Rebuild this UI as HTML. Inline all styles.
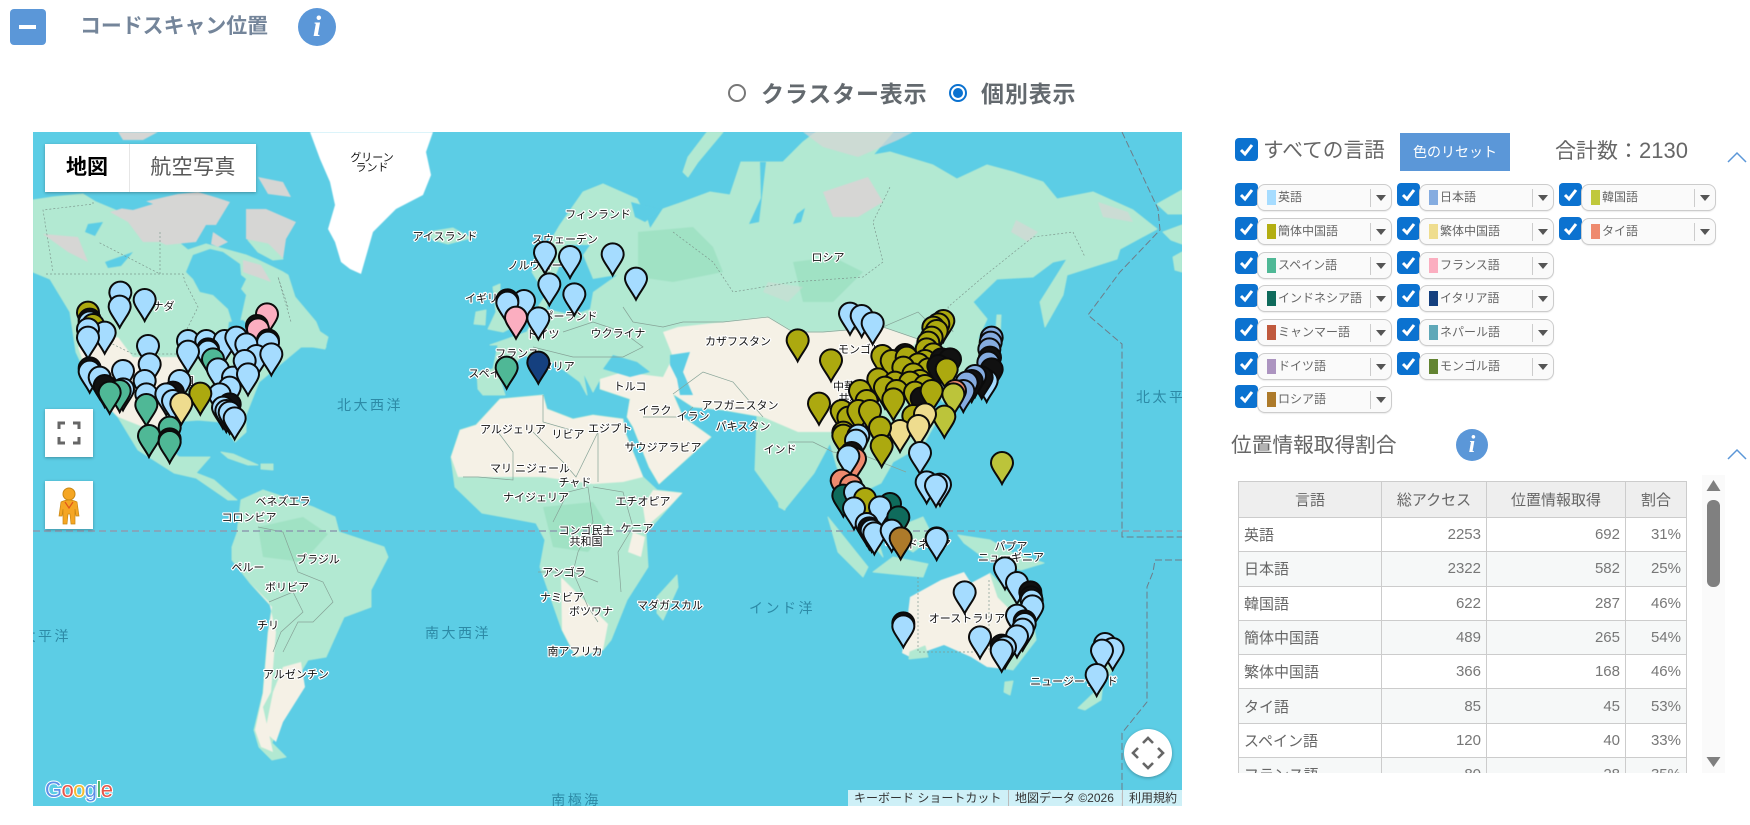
<!DOCTYPE html>
<html lang="ja"><head><meta charset="utf-8"><title>コードスキャン位置</title>
<style>
*{box-sizing:border-box}
html,body{margin:0;padding:0;width:1750px;height:825px;overflow:hidden;background:#fff;font-family:"Liberation Sans","Noto Sans CJK JP",sans-serif;color:#666}
.a{position:absolute}
.btn{left:10px;top:9px;width:36px;height:36px;background:#5b97d8;border-radius:4px}
.btn i{position:absolute;left:9px;top:16px;width:17px;height:4px;background:#fff}
.title{left:80px;top:12px;font-size:20.9px;font-weight:700;color:#74859a;line-height:30px;white-space:nowrap}
.info{border-radius:50%;background:#5b97d8;color:#fff;font-family:"Liberation Serif",serif;font-style:italic;font-weight:700;text-align:center}
.rad{border-radius:50%;width:18px;height:18px;border:2px solid #777;background:#fff}
.rad.on{border:2px solid #0b72d0}
.rad.on i{position:absolute;left:2px;top:2px;width:10px;height:10px;border-radius:50%;background:#0b72d0}
.rl{font-size:23px;font-weight:700;color:#63696e;line-height:34px;letter-spacing:.85px;white-space:nowrap}
#map{left:33px;top:132px;width:1149px;height:674px;overflow:hidden;background:#5ccde5}
#map svg{position:absolute;left:0;top:0}
.c{fill:#b2e9d2;stroke:#b2e9d2;stroke-width:1;stroke-linejoin:round}.be{fill:#f5f1e6}.g{fill:#d6d6d4}.f{fill:#a0e2c4}.w{fill:#5ccde5}.ice{fill:#fff}
.l text{font-size:11px;fill:#111;stroke:#fff;stroke-width:2.4px;paint-order:stroke;stroke-linejoin:round;text-anchor:middle;dominant-baseline:central}
.s text{font-size:14px;fill:#2d8aa6;letter-spacing:2.5px;text-anchor:middle;dominant-baseline:central}
.bd{fill:none;stroke:#7f9a90;stroke-width:.7;stroke-dasharray:2 2}
.bs{fill:none;stroke:#86a397;stroke-width:.7}
#pins use{stroke:#0b0b0b;stroke-width:6}
.b{fill:#a5dcff}.o{fill:#aca90f}.y{fill:#bcc43a}.k{fill:#eedc8e}.j{fill:#85ace0}.t{fill:#4fb896}.d{fill:#0f6b5c}.r{fill:#ee8a6e}.p{fill:#fbaec0}.n{fill:#15407f}.u{fill:#ad7a2a}.x{fill:#111}
.mt{left:12px;top:12px;width:211px;height:48px;background:#fff;box-shadow:0 1px 3px rgba(0,0,0,.3);font-size:21px;line-height:48px}
.mt b{position:absolute;left:0;top:0;text-align:center;color:#000;font-weight:700;border-right:1px solid #e6e6e6;height:48px;width:85px}
.mt span{position:absolute;left:85px;top:0;width:126px;text-align:center;color:#565656;letter-spacing:.4px}
.sq{width:48px;height:48px;background:#fff;box-shadow:0 1px 3px rgba(0,0,0,.3)}
.attr{left:815px;top:658px;width:334px;height:16px;background:rgba(255,255,255,.7);font-size:12px;line-height:16px;color:#333;white-space:nowrap}
.attr span{position:absolute;top:0}
.cb{width:23px;height:23px;background:#0b72d0;border-radius:4px}
.cb svg{position:absolute;left:3px;top:3px}
.sel{width:135px;height:27px;background:#fafafa;border:1px solid #ccc;border-radius:8px;box-shadow:0 1px 1px rgba(0,0,0,.08);font-size:12px;line-height:25px;color:#666;white-space:nowrap}
.sel u{position:absolute;left:9px;top:5px;width:9px;height:15px}
.sel span{position:absolute;left:20px;top:0}
.sel em{position:absolute;left:112px;top:4px;width:1px;height:18px;background:#ccc}
.sel i{position:absolute;left:118px;top:10px;border-left:5.5px solid transparent;border-right:5.5px solid transparent;border-top:6px solid #555}
.reset{left:1400px;top:133px;width:110px;height:38px;background:#5b97d8;color:#fff;font-size:14px;line-height:38px;text-align:center}
.h{font-size:20.7px;color:#666;line-height:30px;white-space:nowrap}
.tw{left:1238px;top:481px;width:449px;height:292px;overflow:hidden}
table{border-collapse:collapse;table-layout:fixed;width:448px;font-size:14.5px;color:#777}
th,td{border:1px solid #ccc;padding:0 5px;height:34.3px;font-weight:400}
th{background:#eee;color:#666;text-align:center;height:36px;font-size:15px}
td{text-align:right;font-size:15px}
td:first-child{text-align:left;color:#666;font-size:15px}
tbody tr:nth-child(odd) td{background:#fff}
tbody tr:nth-child(even) td{background:#f6f8f8}
</style></head><body>

<div class="a btn"><i></i></div>
<div class="a title">コードスキャン位置</div>
<div class="a info" style="left:298px;top:8px;width:38px;height:38px;font-size:30px;line-height:38px">i</div>

<div class="a rad" style="left:728px;top:84px"></div>
<div class="a rl" style="left:761px;top:77px">クラスター表示</div>
<div class="a rad on" style="left:949px;top:84px"><i></i></div>
<div class="a rl" style="left:981px;top:77px">個別表示</div>

<div class="a" id="map">
<svg width="1149" height="674" viewBox="0 0 1149 674" xmlns="http://www.w3.org/2000/svg">
<defs><path id="p" d="M0,0C-12,-24 -33,-46 -33,-63A33,33 0 1 1 33,-63C33,-46 12,-24 0,0Z"/></defs>

<g style="filter:blur(.5px)">
<polygon class="ice" points="277,0 400,0 393,20 398,43 390,63 363,77 340,100 328,142 317,137 308,130 302,110 295,97 302,73 297,50 287,27"/>
<!-- North America -->
<polygon class="c" points="0,68 20,65 50,62 63,70 87,80 110,78 127,95 155,118 173,112 213,123 225,128 250,140 255,143 262,165 283,190 293,215 268,215 250,230 226,250 213,283 213,300 202,310 188,290 165,288 140,290 125,295 128,310 146,325 177,325 163,341 181,348 204,368 195,368 163,346 141,341 105,318 85,285 70,270 57,250 43,220 37,180 17,147 0,140"/>
<polygon class="be" points="45,215 85,205 100,225 150,225 150,250 135,280 125,295 110,295 85,285 70,270 57,250"/>
<polygon class="c" points="155,205 213,200 240,215 215,250 205,280 180,280 160,250"/>
<polygon class="c" points="280,195 295,205 292,217 280,215"/>
<polygon class="w" points="153,140 160,123 177,117 190,120 207,132 208,143 213,147 208,157 213,163 207,190 200,193 195,177 180,163 167,160 160,147"/>
<polygon class="w" points="196,190 210,188 222,200 205,205 195,198"/>
<polygon class="w" points="72,130 100,120 88,134 75,136"/>
<polygon class="w" points="55,92 70,90 62,104 52,100"/>
<polygon class="g" points="10,102 45,105 55,130 35,120"/>
<polygon class="g" points="77,80 110,70 145,62 165,60 185,66 197,70 183,93 173,93 163,110 133,113 127,110 110,110 95,90"/>
<polygon class="w" points="62,65 95,62 120,72 100,78 78,75"/>
<polygon class="g" points="213,77 233,77 263,90 253,107 250,127 233,113 213,107"/>
<polygon class="c" points="215,108 235,112 250,127 240,128 225,120"/>
<polygon class="g" points="180,100 195,110 185,115 178,112"/>
<polygon class="g" points="210,128 228,133 238,150 210,140"/>
<polygon class="g" points="85,0 125,0 110,8 90,8"/>
<polygon class="g" points="225,45 250,50 258,65 235,62"/>
<polygon class="c" points="188,320 200,322 225,333 215,333 195,326"/>
<polygon class="c" points="228,332 240,332 240,338 228,337"/>
<!-- South America -->
<polygon class="c" points="208,368 230,358 280,375 302,385 306,400 351,415 355,425 338,458 338,475 311,485 293,525 275,528 257,558 248,585 239,611 253,625 239,628 226,615 221,598 230,561 235,501 239,475 217,451 199,428 199,415 204,401"/>
<polygon class="f" points="225,395 270,385 295,402 270,430 230,425"/>
<polygon class="be" points="218,452 236,470 243,500 238,560 230,575 240,620 228,615 222,598 230,561 235,501 239,475"/>
<polygon class="be" points="250,535 268,530 272,555 250,590 243,610 232,600 240,560"/>
<!-- Africa -->
<polygon class="c" points="418,325 427,298 443,293 467,267 510,263 514,277 540,287 560,283 590,287 592,300 610,345 624,358 649,361 636,375 613,401 615,435 594,468 578,508 570,518 543,525 529,498 507,435 512,408 503,391 449,381 422,355"/>
<polygon class="be" points="418,325 427,298 443,293 467,267 510,263 514,277 540,287 560,283 590,287 592,300 610,345 590,350 560,352 510,345 470,345 425,345"/>
<polygon class="be" points="620,358 649,361 636,375 613,395 610,375"/>
<polygon class="be" points="528,445 553,470 575,492 570,518 543,525 529,498"/>
<polygon class="f" points="510,375 560,370 575,395 555,420 520,415"/>
<polygon class="be" points="600,400 612,405 608,425 595,420"/>
<polygon class="c" points="644,443 645,455 630,488 624,481 624,465"/>
<!-- Eurasia -->
<polygon class="c" points="499,140 527,93 550,60 570,52 604,67 614,87 617,97 630,77 650,70 677,60 697,63 708,30 727,30 750,30 770,10 783,0 860,0 840,23 857,20 900,33 924,47 954,33 980,40 1010,50 1024,67 1060,60 1100,78 1124,97 1087,117 1084,127 1034,143 1030,163 1012,195 1007,170 1024,143 1034,127 1020,130 1000,145 964,147 940,170 954,187 940,217 924,233 912,237 914,267 900,267 900,240 892,238 893,262 907,283 890,313 860,330 848,351 827,361 838,385 850,425 838,410 826,385 816,368 804,335 797,311 781,341 751,378 722,338 724,284 690,278 660,275 640,262 650,285 678,305 626,352 616,335 600,295 594,285 597,267 567,257 567,247 560,260 550,240 554,263 547,250 520,230 490,223 467,247 472,263 450,263 445,257 444,240 460,237 465,213 457,213 494,200 505,175 517,157 507,153"/>
<polygon class="f" points="605,100 660,95 680,115 690,140 640,150 605,145"/>
<polygon class="f" points="760,130 800,125 830,140 800,170 770,170"/>
<polygon class="be" points="630,200 645,195 690,190 735,185 760,200 790,200 850,195 885,207 870,230 855,255 835,290 800,300 765,300 730,285 724,284 690,278 660,275 640,262 650,285 678,305 626,352 616,335 600,295 594,285 597,267 567,257 567,247 590,240 630,245 640,225"/>
<polygon class="g" points="790,60 835,45 850,70 825,85 800,85"/>
<polygon class="g" points="735,150 770,155 755,170 730,160" opacity=".45"/>
<polygon class="g" points="983,88 1005,100 995,110 978,100" opacity=".7"/>
<polygon class="g" points="1065,70 1095,80 1100,90 1070,85" opacity=".7"/>
<polygon class="g" points="825,25 865,8 880,0 770,0 790,15" opacity=".75"/>
<polygon class="w" points="557,177 540,183 514,177 517,157 527,133 533,113 557,113 550,123 560,147 584,143 560,160"/>
<polygon class="w" points="570,237 580,223 604,230 617,240 597,245"/>
<polygon class="w" points="637,223 657,220 650,240 660,263 647,263 644,247 637,233"/>
<polygon class="w" points="727,30 733,30 726,90 716,92 728,66"/>
<polygon class="w" points="598,70 628,78 612,90 602,85"/>
<polygon class="w" points="764,82 772,76 768,90 760,92"/>
<polygon class="c" points="674,0 690,0 665,30 655,45 650,40 655,25"/>
<polygon class="c" points="964,183 968,183 967,205 962,212"/>
<polygon class="c" points="460,155 467,152 467,175 480,195 470,200 455,197 463,180"/>
<polygon class="c" points="443,180 453,178 452,193 441,192"/>
<polygon class="c" points="395,100 420,96 438,106 415,112 400,108"/>
<polygon class="c" points="882,240 892,235 890,255 900,265 890,270 880,252"/>
<polygon class="c" points="925,215 945,205 950,220 935,255 910,270 905,262 925,238"/>
<polygon class="c" points="1030,100 1040,98 1044,102 1032,104" />
<polygon class="c" points="1124,72 1149,58 1149,82 1135,82"/>
<polygon class="c" points="1130,100 1149,93 1149,112 1138,108"/>
<polygon class="c" points="1140,125 1149,120 1149,140 1142,138"/>
<polygon class="c" points="795,385 815,410 835,435 830,445 805,420"/>
<polygon class="c" points="840,440 890,445 895,432 860,425"/>
<polygon class="c" points="865,395 890,385 900,405 880,420 862,410"/>
<polygon class="c" points="900,345 912,360 905,375 895,365"/>
<polygon class="c" points="925,403 957,408 980,421 1011,431 988,438 950,425 931,411"/>
<polygon class="be" points="908,448 931,440 938,451 957,441 973,458 999,481 1003,508 980,538 954,535 938,525 911,513 877,525 869,521 873,498 877,465"/>
<polygon class="c" points="957,441 973,458 999,481 1003,508 980,538 968,535 985,505 980,480 965,465"/>
<polygon class="c" points="877,520 892,514 895,525 876,527"/>
<polygon class="c" points="972,550 980,549 977,563 971,560"/>
<polygon class="c" points="1045,576 1064,558 1070,550 1068,568 1052,578"/>
<polygon class="c" points="1072,530 1082,520 1088,525 1076,543"/>
<polygon class="c" points="745,365 752,368 752,378 746,375"/>
</g>

<polyline class="bd" points="13,142 150,142 152,150 165,175 150,205 147,222 100,222 65,205"/>
<polyline class="bd" points="60,70 60,72 10,78 20,140"/>
<polyline class="bd" points="127,100 127,142 65,110"/>
<polyline class="bd" points="255,175 245,145 258,190"/>
<polyline class="bs" points="500,300 530,330 543,345 565,300 565,350"/>
<polyline class="bs" points="465,300 480,320 480,348 445,345 430,345"/>
<polyline class="bs" points="510,263 510,290 545,300"/>
<polyline class="bs" points="520,390 535,360 555,355 560,390 545,420 540,440 565,450"/>
<polyline class="bs" points="560,355 590,360 600,395 585,420 588,460"/>
<polyline class="bs" points="505,440 540,440 555,475 565,490"/>
<polyline class="bs" points="225,395 250,400 265,440 290,450 300,470 280,490 265,490 250,520"/>
<polyline class="bs" points="236,470 260,460 270,480 248,500 240,520"/>
<polyline class="bs" points="590,175 600,190 630,195 650,190 690,190 735,185 760,200 790,200 850,195 885,207"/>
<polyline class="bs" points="530,200 560,190 590,200 610,215 590,225 540,225 500,215"/>
<polyline class="bs" points="640,262 670,240 700,250 730,285"/>
<polyline class="bs" points="610,285 650,285 660,275"/>
<polyline class="bd" points="640,100 680,130 700,160 760,150 830,145 850,130 840,90 857,55"/>
<polyline class="bd" points="920,200 915,175 950,145 1000,105 1040,100 1052,125"/>
<polyline class="bs" points="850,195 885,180 905,200 895,225"/>
<polyline class="bs" points="873,340 835,325 800,320 780,310 755,310"/>
<polyline class="bd" points="956,448 956,520"/>
<polyline class="bd" points="885,445 885,520 940,520"/>
<line x1="0" y1="399" x2="1149" y2="399" stroke="#8d9cb0" stroke-width="1.5" stroke-dasharray="7 4"/>
<polyline fill="none" stroke="#6e7c88" stroke-width="1" stroke-dasharray="7 3" points="1089,0 1125,77 1127,98 1087,140 1055,183 1089,212 1089,405 1149,405"/>
<polyline fill="none" stroke="#6e7c88" stroke-width="1" stroke-dasharray="7 3" points="1149,428 1122,428 1120,440 1114,455 1114,570 1089,601 1089,674"/>

<g class="s">
<text x="337" y="273">北大西洋</text><text x="425" y="501">南大西洋</text><text x="749" y="476">インド洋</text><text x="543" y="668">南極海</text>
<text x="1103" y="265" style="text-anchor:start">北太平洋</text><text x="38" y="504" style="text-anchor:end">太平洋</text>
</g>
<g class="l">
<text x="339" y="26">グリーン</text><text x="339" y="36">ランド</text><text x="412" y="105">アイスランド</text>
<text x="565" y="83">フィンランド</text><text x="532" y="108">スウェーデン</text><text x="502" y="134">ノルウェー</text><text x="454" y="167">イギリス</text>
<text x="537" y="185">ポーランド</text><text x="510" y="203">ドイツ</text><text x="585" y="202">ウクライナ</text><text x="484" y="222">フランス</text>
<text x="457" y="242">スペイン</text><text x="520" y="235">イタリア</text><text x="597" y="255">トルコ</text><text x="705" y="210">カザフスタン</text>
<text x="827" y="218">モンゴル</text><text x="795" y="126">ロシア</text><text x="822" y="255">中華人民</text><text x="822" y="267">共和国</text>
<text x="707" y="274">アフガニスタン</text><text x="660" y="285">イラン</text><text x="622" y="279">イラク</text><text x="710" y="295">パキスタン</text>
<text x="630" y="316">サウジアラビア</text><text x="747" y="318">インド</text><text x="577" y="297">エジプト</text><text x="535" y="303">リビア</text><text x="480" y="298">アルジェリア</text>
<text x="497" y="337">マリ ニジェール</text><text x="542" y="351">チャド</text><text x="503" y="366">ナイジェリア</text><text x="610" y="370">エチオピア</text>
<text x="553" y="399">コンゴ民主</text><text x="553" y="410">共和国</text><text x="604" y="397">ケニア</text><text x="531" y="441">アンゴラ</text><text x="529" y="466">ナミビア</text>
<text x="558" y="480">ボツワナ</text><text x="637" y="474">マダガスカル</text><text x="542" y="520">南アフリカ</text>
<text x="250" y="370">ベネズエラ</text><text x="216" y="386">コロンビア</text><text x="285" y="428">ブラジル</text><text x="215" y="436">ペルー</text><text x="254" y="456">ボリビア</text><text x="235" y="494">チリ</text><text x="263" y="543">アルゼンチン</text>
<text x="125" y="175">カナダ</text><text x="150" y="250">米国</text>
<text x="885" y="413">インドネシア</text><text x="934" y="487">オーストラリア</text><text x="978" y="415">パプア</text><text x="978" y="426">ニューギニア</text><text x="1041" y="550">ニュージーランド</text>
</g>

<g id="pins">
<g transform="scale(.33333)">
<use href="#p" x="262" y="545" class="b"/><use href="#p" x="260" y="587" class="b"/><use href="#p" x="335" y="567" class="b"/>
<use href="#p" x="165" y="605" class="o"/><use href="#p" x="170" y="626" class="x"/><use href="#p" x="170" y="634" class="b"/><use href="#p" x="180" y="642" class="o"/><use href="#p" x="215" y="665" class="b"/><use href="#p" x="165" y="655" class="b"/><use href="#p" x="165" y="680" class="b"/>
<use href="#p" x="702" y="610" class="p"/><use href="#p" x="672" y="645" class="x"/><use href="#p" x="675" y="655" class="p"/>
<use href="#p" x="345" y="705" class="b"/><use href="#p" x="350" y="760" class="b"/><use href="#p" x="270" y="780" class="b"/>
<use href="#p" x="465" y="690" class="b"/><use href="#p" x="520" y="690" class="b"/><use href="#p" x="575" y="690" class="b"/><use href="#p" x="610" y="680" class="b"/><use href="#p" x="525" y="715" class="x"/><use href="#p" x="525" y="722" class="b"/><use href="#p" x="465" y="722" class="b"/><use href="#p" x="540" y="745" class="t"/>
<use href="#p" x="705" y="688" class="x"/><use href="#p" x="705" y="695" class="b"/><use href="#p" x="640" y="700" class="b"/><use href="#p" x="670" y="735" class="b"/><use href="#p" x="715" y="730" class="b"/>
<use href="#p" x="170" y="772" class="x"/><use href="#p" x="170" y="782" class="b"/><use href="#p" x="200" y="800" class="b"/><use href="#p" x="215" y="825" class="x"/><use href="#p" x="270" y="835" class="b"/>
<use href="#p" x="335" y="810" class="b"/><use href="#p" x="340" y="850" class="b"/><use href="#p" x="260" y="840" class="t"/><use href="#p" x="230" y="845" class="t"/>
<use href="#p" x="555" y="775" class="b"/><use href="#p" x="600" y="800" class="b"/><use href="#p" x="635" y="750" class="b"/><use href="#p" x="645" y="790" class="b"/><use href="#p" x="590" y="830" class="b"/><use href="#p" x="560" y="850" class="b"/>
<use href="#p" x="440" y="810" class="b"/><use href="#p" x="420" y="845" class="x"/><use href="#p" x="400" y="850" class="b"/><use href="#p" x="420" y="870" class="b"/>
<use href="#p" x="340" y="882" class="t"/><use href="#p" x="502" y="848" class="o"/><use href="#p" x="445" y="878" class="k"/>
<use href="#p" x="590" y="880" class="x"/><use href="#p" x="570" y="890" class="b"/><use href="#p" x="580" y="900" class="b"/><use href="#p" x="590" y="905" class="b"/><use href="#p" x="605" y="922" class="b"/>
<use href="#p" x="410" y="950" class="t"/><use href="#p" x="348" y="975" class="t"/><use href="#p" x="410" y="985" class="x"/><use href="#p" x="410" y="993" class="t"/>
</g>
<g transform="translate(417,0) scale(.33333)">
<use href="#p" x="285" y="425" class="b"/><use href="#p" x="360" y="438" class="b"/><use href="#p" x="488" y="430" class="b"/><use href="#p" x="558" y="503" class="b"/><use href="#p" x="298" y="520" class="b"/><use href="#p" x="373" y="550" class="b"/>
<use href="#p" x="222" y="570" class="b"/><use href="#p" x="172" y="568" class="x"/><use href="#p" x="172" y="575" class="b"/><use href="#p" x="198" y="620" class="p"/><use href="#p" x="265" y="622" class="b"/>
<use href="#p" x="265" y="755" class="n"/><use href="#p" x="170" y="770" class="t"/>
<use href="#p" x="1043" y="688" class="o"/><use href="#p" x="1143" y="748" class="o"/><use href="#p" x="1107" y="878" class="o"/>
</g>
<g transform="translate(767,0) scale(.33333)">
<use href="#p" x="150" y="608" class="b"/><use href="#p" x="185" y="615" class="b"/><use href="#p" x="218" y="637" class="b"/>
<use href="#p" x="430" y="630" class="o"/><use href="#p" x="415" y="640" class="o"/><use href="#p" x="400" y="650" class="o"/><use href="#p" x="410" y="660" class="o"/><use href="#p" x="395" y="680" class="o"/><use href="#p" x="385" y="695" class="o"/><use href="#p" x="380" y="715" class="o"/><use href="#p" x="400" y="730" class="o"/><use href="#p" x="375" y="750" class="o"/>
<use href="#p" x="247" y="735" class="o"/><use href="#p" x="315" y="732" class="x"/><use href="#p" x="275" y="750" class="o"/><use href="#p" x="320" y="740" class="o"/><use href="#p" x="355" y="760" class="o"/><use href="#p" x="310" y="770" class="o"/><use href="#p" x="385" y="775" class="o"/>
<use href="#p" x="425" y="745" class="x"/><use href="#p" x="450" y="745" class="x"/><use href="#p" x="415" y="765" class="x"/><use href="#p" x="440" y="775" class="o"/>
<use href="#p" x="235" y="805" class="o"/><use href="#p" x="340" y="790" class="o"/><use href="#p" x="360" y="810" class="o"/><use href="#p" x="285" y="815" class="o"/><use href="#p" x="255" y="830" class="o"/><use href="#p" x="330" y="815" class="o"/><use href="#p" x="375" y="825" class="o"/><use href="#p" x="290" y="840" class="o"/><use href="#p" x="345" y="845" class="o"/><use href="#p" x="280" y="865" class="o"/><use href="#p" x="365" y="862" class="x"/><use href="#p" x="395" y="840" class="o"/>
<use href="#p" x="180" y="840" class="o"/><use href="#p" x="200" y="870" class="o"/>
<use href="#p" x="125" y="900" class="o"/><use href="#p" x="145" y="920" class="o"/><use href="#p" x="175" y="900" class="o"/><use href="#p" x="210" y="900" class="o"/>
<use href="#p" x="575" y="680" class="j"/><use href="#p" x="572" y="695" class="j"/><use href="#p" x="568" y="715" class="j"/><use href="#p" x="570" y="740" class="x"/><use href="#p" x="565" y="755" class="j"/><use href="#p" x="575" y="775" class="x"/>
<use href="#p" x="560" y="810" class="b"/><use href="#p" x="545" y="800" class="x"/><use href="#p" x="525" y="795" class="j"/><use href="#p" x="515" y="810" class="x"/><use href="#p" x="500" y="815" class="j"/><use href="#p" x="490" y="840" class="j"/><use href="#p" x="465" y="840" class="r"/><use href="#p" x="460" y="850" class="y"/>
<use href="#p" x="433" y="917" class="y"/>
<use href="#p" x="340" y="915" class="o"/><use href="#p" x="375" y="910" class="k"/><use href="#p" x="300" y="960" class="k"/><use href="#p" x="355" y="945" class="k"/>
<use href="#p" x="130" y="965" class="o"/><use href="#p" x="240" y="950" class="o"/><use href="#p" x="245" y="1005" class="o"/>
</g>
<g transform="translate(747,148) scale(.33333)">
<use href="#p" x="190" y="530" class="o"/><use href="#p" x="235" y="530" class="b"/><use href="#p" x="228" y="545" class="b"/><use href="#p" x="215" y="582" class="x"/><use href="#p" x="225" y="600" class="r"/><use href="#p" x="205" y="592" class="b"/>
<use href="#p" x="420" y="582" class="b"/><use href="#p" x="480" y="677" class="b"/><use href="#p" x="440" y="670" class="b"/><use href="#p" x="468" y="680" class="b"/>
<use href="#p" x="185" y="665" class="r"/><use href="#p" x="213" y="680" class="r"/><use href="#p" x="190" y="710" class="d"/><use href="#p" x="225" y="700" class="b"/><use href="#p" x="255" y="720" class="o"/><use href="#p" x="330" y="735" class="d"/><use href="#p" x="300" y="745" class="b"/><use href="#p" x="222" y="748" class="b"/><use href="#p" x="355" y="775" class="d"/>
<use href="#p" x="260" y="795" class="b"/><use href="#p" x="268" y="808" class="x"/><use href="#p" x="275" y="815" class="b"/><use href="#p" x="283" y="823" class="b"/><use href="#p" x="335" y="815" class="b"/><use href="#p" x="362" y="838" class="u"/><use href="#p" x="470" y="838" class="b"/>
<use href="#p" x="666" y="612" class="y"/>
</g>
<g transform="translate(567,268) scale(.33333)">
<use href="#p" x="1215" y="568" class="b"/><use href="#p" x="1251" y="612" class="b"/><use href="#p" x="1094" y="640" class="b"/><use href="#p" x="910" y="733" class="x"/><use href="#p" x="910" y="742" class="b"/>
<use href="#p" x="1291" y="640" class="x"/><use href="#p" x="1293" y="655" class="x"/><use href="#p" x="1295" y="665" class="b"/><use href="#p" x="1297" y="682" class="b"/><use href="#p" x="1251" y="710" class="b"/><use href="#p" x="1274" y="727" class="x"/><use href="#p" x="1274" y="735" class="b"/><use href="#p" x="1268" y="752" class="b"/><use href="#p" x="1251" y="772" class="b"/><use href="#p" x="1140" y="775" class="b"/>
<use href="#p" x="1205" y="800" class="x"/><use href="#p" x="1215" y="805" class="b"/><use href="#p" x="1205" y="815" class="b"/>
<use href="#p" x="1515" y="795" class="b"/><use href="#p" x="1538" y="810" class="b"/><use href="#p" x="1506" y="815" class="b"/><use href="#p" x="1490" y="888" class="b"/>
<use href="#p" x="1010" y="480" class="b"/>
</g>
</g>

<text x="12" y="665" font-family="Liberation Sans,sans-serif" font-size="22" stroke="#fff" stroke-width="2" paint-order="stroke" letter-spacing="-.6"><tspan fill="#5c8fe8">G</tspan><tspan fill="#e8574a">o</tspan><tspan fill="#f2bb2f">o</tspan><tspan fill="#5c8fe8">g</tspan><tspan fill="#4db46a">l</tspan><tspan fill="#e8574a">e</tspan></text>
</svg>

<div class="a mt"><b>地図</b><span>航空写真</span></div>
<div class="a sq" style="left:12px;top:277px"><svg width="48" height="48"><path d="M14,20V14H20M28,14H34V20M34,28V34H28M20,34H14V28" fill="none" stroke="#666" stroke-width="3"/></svg></div>
<div class="a sq" style="left:12px;top:349px"><svg width="48" height="48"><circle cx="24" cy="13" r="6" fill="#f5a623" stroke="#c98612"/><path d="M16,21Q24,17 32,21L34,35 31,35 30,28 30,43 26,43 25,33 23,33 22,43 18,43 18,28 17,35 14,35Z" fill="#f5a623" stroke="#c98612" stroke-width=".7"/><path d="M20,21L24,27 28,21" fill="none" stroke="#e0561a" stroke-width="1.2"/></svg></div>
<div class="a" style="left:1091px;top:597px;width:48px;height:48px;border-radius:50%;background:#fff;box-shadow:0 1px 3px rgba(0,0,0,.3)"><svg width="48" height="48"><path d="M19,14L24,9 29,14M19,34L24,39 29,34M14,19L9,24 14,29M34,19L39,24 34,29" fill="none" stroke="#666" stroke-width="2.6"/></svg></div>
<div class="a attr"><span style="left:6px">キーボード ショートカット</span><span style="left:160px;width:1px;height:16px;background:#bbb"></span><span style="left:167px">地図データ ©2026</span><span style="left:274px;width:1px;height:16px;background:#bbb"></span><span style="left:281px">利用規約</span></div>
</div>

<div class="a cb" style="left:1235px;top:138px"><svg width="17" height="17"><path d="M3,9L7,13 14,4" fill="none" stroke="#fff" stroke-width="3"/></svg></div>
<div class="a h" style="left:1263px;top:136px">すべての言語</div>
<div class="a reset">色のリセット</div>
<div class="a h" style="left:1555px;top:136px;font-size:21px">合計数：<span style="font-size:22px">2130</span></div>
<svg class="a" style="left:1727px;top:150px" width="20" height="14"><path d="M1,12L10,3 19,12" fill="none" stroke="#5b97d8" stroke-width="1.5"/></svg>

<div id="rows">
<div class="a cb" style="left:1235px;top:183px"><svg width="17" height="17"><path d="M3,9L7,13 14,4" fill="none" stroke="#fff" stroke-width="3"/></svg></div>
<div class="a sel" style="left:1257px;top:184px"><u style="background:#a6dcff"></u><span>英語</span><em></em><i></i></div>
<div class="a cb" style="left:1397px;top:183px"><svg width="17" height="17"><path d="M3,9L7,13 14,4" fill="none" stroke="#fff" stroke-width="3"/></svg></div>
<div class="a sel" style="left:1419px;top:184px"><u style="background:#85ace0"></u><span>日本語</span><em></em><i></i></div>
<div class="a cb" style="left:1559px;top:183px"><svg width="17" height="17"><path d="M3,9L7,13 14,4" fill="none" stroke="#fff" stroke-width="3"/></svg></div>
<div class="a sel" style="left:1581px;top:184px"><u style="background:#c0c83c"></u><span>韓国語</span><em></em><i></i></div>

<div class="a cb" style="left:1235px;top:217px"><svg width="17" height="17"><path d="M3,9L7,13 14,4" fill="none" stroke="#fff" stroke-width="3"/></svg></div>
<div class="a sel" style="left:1257px;top:218px"><u style="background:#b3ae12"></u><span>簡体中国語</span><em></em><i></i></div>
<div class="a cb" style="left:1397px;top:217px"><svg width="17" height="17"><path d="M3,9L7,13 14,4" fill="none" stroke="#fff" stroke-width="3"/></svg></div>
<div class="a sel" style="left:1419px;top:218px"><u style="background:#efdd8f"></u><span>繁体中国語</span><em></em><i></i></div>
<div class="a cb" style="left:1559px;top:217px"><svg width="17" height="17"><path d="M3,9L7,13 14,4" fill="none" stroke="#fff" stroke-width="3"/></svg></div>
<div class="a sel" style="left:1581px;top:218px"><u style="background:#ee8a6e"></u><span>タイ語</span><em></em><i></i></div>

<div class="a cb" style="left:1235px;top:251px"><svg width="17" height="17"><path d="M3,9L7,13 14,4" fill="none" stroke="#fff" stroke-width="3"/></svg></div>
<div class="a sel" style="left:1257px;top:252px"><u style="background:#4fb896"></u><span>スペイン語</span><em></em><i></i></div>
<div class="a cb" style="left:1397px;top:251px"><svg width="17" height="17"><path d="M3,9L7,13 14,4" fill="none" stroke="#fff" stroke-width="3"/></svg></div>
<div class="a sel" style="left:1419px;top:252px"><u style="background:#fbaec0"></u><span>フランス語</span><em></em><i></i></div>

<div class="a cb" style="left:1235px;top:284px"><svg width="17" height="17"><path d="M3,9L7,13 14,4" fill="none" stroke="#fff" stroke-width="3"/></svg></div>
<div class="a sel" style="left:1257px;top:285px"><u style="background:#0f6b5c"></u><span>インドネシア語</span><em></em><i></i></div>
<div class="a cb" style="left:1397px;top:284px"><svg width="17" height="17"><path d="M3,9L7,13 14,4" fill="none" stroke="#fff" stroke-width="3"/></svg></div>
<div class="a sel" style="left:1419px;top:285px"><u style="background:#15407f"></u><span>イタリア語</span><em></em><i></i></div>

<div class="a cb" style="left:1235px;top:318px"><svg width="17" height="17"><path d="M3,9L7,13 14,4" fill="none" stroke="#fff" stroke-width="3"/></svg></div>
<div class="a sel" style="left:1257px;top:319px"><u style="background:#c0593d"></u><span>ミャンマー語</span><em></em><i></i></div>
<div class="a cb" style="left:1397px;top:318px"><svg width="17" height="17"><path d="M3,9L7,13 14,4" fill="none" stroke="#fff" stroke-width="3"/></svg></div>
<div class="a sel" style="left:1419px;top:319px"><u style="background:#5fa8b8"></u><span>ネパール語</span><em></em><i></i></div>

<div class="a cb" style="left:1235px;top:352px"><svg width="17" height="17"><path d="M3,9L7,13 14,4" fill="none" stroke="#fff" stroke-width="3"/></svg></div>
<div class="a sel" style="left:1257px;top:353px"><u style="background:#ac94c0"></u><span>ドイツ語</span><em></em><i></i></div>
<div class="a cb" style="left:1397px;top:352px"><svg width="17" height="17"><path d="M3,9L7,13 14,4" fill="none" stroke="#fff" stroke-width="3"/></svg></div>
<div class="a sel" style="left:1419px;top:353px"><u style="background:#638432"></u><span>モンゴル語</span><em></em><i></i></div>

<div class="a cb" style="left:1235px;top:385px"><svg width="17" height="17"><path d="M3,9L7,13 14,4" fill="none" stroke="#fff" stroke-width="3"/></svg></div>
<div class="a sel" style="left:1257px;top:386px"><u style="background:#ad7a2a"></u><span>ロシア語</span><em></em><i></i></div>
</div>

<div class="a h" style="left:1231px;top:431px">位置情報取得割合</div>
<div class="a info" style="left:1456px;top:429px;width:32px;height:32px;font-size:24px;line-height:32px">i</div>
<svg class="a" style="left:1727px;top:447px" width="20" height="14"><path d="M1,12L10,3 19,12" fill="none" stroke="#5b97d8" stroke-width="1.5"/></svg>

<div class="a tw"><table>
<colgroup><col style="width:143px"><col style="width:105px"><col style="width:139px"><col style="width:61px"></colgroup>
<thead><tr><th>言語</th><th>総アクセス</th><th>位置情報取得</th><th>割合</th></tr></thead>
<tbody>
<tr><td>英語</td><td>2253</td><td>692</td><td>31%</td></tr>
<tr><td>日本語</td><td>2322</td><td>582</td><td>25%</td></tr>
<tr><td>韓国語</td><td>622</td><td>287</td><td>46%</td></tr>
<tr><td>簡体中国語</td><td>489</td><td>265</td><td>54%</td></tr>
<tr><td>繁体中国語</td><td>366</td><td>168</td><td>46%</td></tr>
<tr><td>タイ語</td><td>85</td><td>45</td><td>53%</td></tr>
<tr><td>スペイン語</td><td>120</td><td>40</td><td>33%</td></tr>
<tr><td>フランス語</td><td>80</td><td>28</td><td>35%</td></tr>
</tbody></table></div>

<div class="a" style="left:1702px;top:475px;width:23px;height:298px;background:#fafafa"></div>
<svg class="a" style="left:1702px;top:475px" width="23" height="298"><path d="M11.5,5L18.5,16H4.5Z" fill="#808080"/><rect x="5" y="25" width="13" height="87" rx="6" fill="#808080"/><path d="M11.5,292L18.5,282H4.5Z" fill="#808080"/></svg>
</body></html>
